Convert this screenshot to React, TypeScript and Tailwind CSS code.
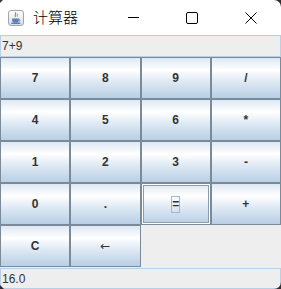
const keys: (string | null)[] = [
  "7", "8", "9", "/",
  "4", "5", "6", "*",
  "1", "2", "3", "-",
  "0", ".", "=", "+",
  "C", "←", null, null,
];

const JavaIcon = () => (
  <svg width="16" height="16" viewBox="0 0 16 16">
    <defs>
      <linearGradient id="jg" x1="0" y1="0" x2="0" y2="1">
        <stop offset="0" stopColor="#ffffff" />
        <stop offset="1" stopColor="#d9dee4" />
      </linearGradient>
    </defs>
    <rect x="0.5" y="0.5" width="15" height="15" rx="2.5" fill="url(#jg)" stroke="#9ba6b2" />
    <path d="M7.2 2.5c1.6 1.4-1.2 2.4 0.4 4.4" stroke="#e76f00" strokeWidth="1.1" fill="none" />
    <path d="M9.2 3.6c1 1-0.6 1.8 0.3 2.9" stroke="#e76f00" strokeWidth="0.9" fill="none" />
    <path d="M4.2 8.6h6.6v1.6a2 2 0 0 1-2 2h-2.6a2 2 0 0 1-2-2z" fill="#5b7fb0" />
    <path d="M10.8 9.2a1.1 1.1 0 0 1 0 2.2" stroke="#5b7fb0" strokeWidth="0.9" fill="none" />
    <ellipse cx="7.8" cy="13.2" rx="4.8" ry="0.9" fill="#5b7fb0" />
  </svg>
);

const CalcButton = ({ label }: { label: string }) => {
  const isDefault = label === "=";
  const isArrow = label === "←";
  return (
    <button
      className={
        "flex items-center justify-center border border-[#7a8a99] bg-[linear-gradient(to_bottom,#dde8f3_0%,#ffffff_30%,#dde8f3_60%,#b8cfe5_100%)] text-[12px] font-bold text-[#333333] " +
        (isDefault ? "shadow-[inset_0_0_0_1px_#ffffff,inset_0_0_0_2px_#8a9bae]" : "")
      }
    >
      {isDefault ? (
        <span className="flex h-[17px] w-[9px] items-center justify-center border border-[#a3b8cc] leading-none">
          {label}
        </span>
      ) : isArrow ? (
        <span className="font-['DejaVu_Sans',sans-serif] text-[12px] font-normal">{label}</span>
      ) : (
        label
      )}
    </button>
  );
};

const App = () => {
  return (
    <div className="relative flex h-[289px] w-[281px] flex-col overflow-hidden bg-[#eeeeee] font-['Liberation_Sans',sans-serif]">
      <div className="flex h-[35px] items-center bg-white">
        <div className="ml-[8px]">
          <JavaIcon />
        </div>
        <span className="ml-[9px] font-['Noto_Sans_CJK_SC',sans-serif] text-[15px] font-light text-black">
          计算器
        </span>
        <div className="ml-auto mr-[1px] flex h-full">
          <div className="flex w-[58.5px] items-center justify-center">
            <svg width="11" height="11" viewBox="0 0 11 11">
              <path d="M0 5.5h11" stroke="#000" strokeWidth="1" />
            </svg>
          </div>
          <div className="flex w-[58.5px] items-center justify-center">
            <svg width="12" height="12" viewBox="0 0 12 12">
              <rect x="0.5" y="0.5" width="11" height="11" rx="1.5" fill="none" stroke="#000" />
            </svg>
          </div>
          <div className="flex w-[58.5px] items-center justify-center">
            <svg width="12" height="12" viewBox="0 0 12 12">
              <path d="M0.5 0.5l11 11M11.5 0.5l-11 11" stroke="#000" strokeWidth="1" />
            </svg>
          </div>
        </div>
      </div>

      <div className="flex h-[22px] items-center border border-[#b8cfe5] px-[1px] text-[12px] text-[#333333]">
        7+9
      </div>

      <div className="grid h-[210px] grid-cols-4 grid-rows-5">
        {keys.map((k, i) => (k ? <CalcButton key={i} label={k} /> : <div key={i} />))}
      </div>

      <div className="mt-[1px] flex h-[21px] items-center border border-[#b8cfe5] px-[1px] text-[12px] text-[#333333]">
        16.0
      </div>

      <svg className="absolute left-0 top-0" width="3" height="3" viewBox="0 0 3 3">
        <path d="M0 0h3L0 3z" fill="#3a3a3a" />
      </svg>
      <svg className="absolute right-0 top-0" width="7" height="7" viewBox="0 0 7 7">
        <path d="M0 0h7v7A7 7 0 0 0 0 0z" fill="#2e2e2e" />
      </svg>
      <svg className="absolute bottom-0 left-0" width="4" height="4" viewBox="0 0 4 4">
        <path d="M0 0v4h4z" fill="#2e2e2e" />
      </svg>
      <svg className="absolute bottom-0 right-0" width="7" height="7" viewBox="0 0 7 7">
        <path d="M7 0v7H0A7 7 0 0 0 7 0z" fill="#2e2e2e" />
      </svg>
    </div>
  );
};

export default App;
